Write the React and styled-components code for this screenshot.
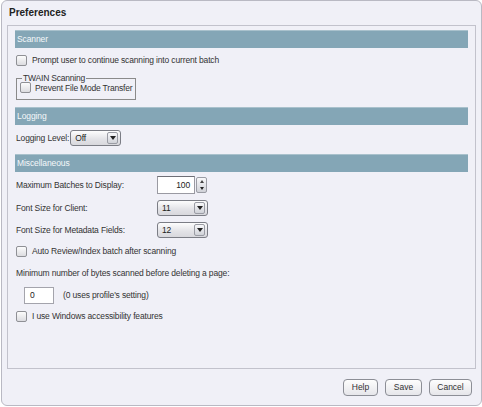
import React from "react";
import styled, { createGlobalStyle } from "styled-components";

const Global = createGlobalStyle`
  html, body { margin: 0; padding: 0; background: #ffffff; }
  body { font-family: "Liberation Sans", Arial, sans-serif; color: #333; }
`;

const Window = styled.div`
  box-sizing: border-box;
  width: 481px;
  height: 406px;
  margin: 0 0 0 1px;
  background: #f0f0f7;
  border: 1px solid #b9b9c3;
  border-radius: 6px;
  display: flex;
  flex-direction: column;
  padding: 0 5px 0 5px;
`;

const Title = styled.div`
  font-weight: bold;
  font-size: 10px;
  color: #222;
  height: 24px;
  line-height: 24px;
  padding-left: 2px;
`;

const Panel = styled.div`
  box-sizing: border-box;
  border: 1px solid #c2c2cc;
  height: 344px;
  padding: 4px 7px 0 7px;
  display: flex;
  flex-direction: column;
`;

const Header = styled.div`
  box-sizing: border-box;
  height: 18px;
  background: #84a6b6;
  border-top: 1px solid #a9c1cc;
  color: #f4f8fa;
  font-size: 8.5px;
  letter-spacing: -0.1px;
  line-height: 16px;
  padding-left: 2px;
  margin-top: ${(p) => p.$mt || 0}px;
`;

const Row = styled.div`
  display: flex;
  align-items: center;
  white-space: nowrap;
  height: ${(p) => p.$h || 22}px;
  margin-top: ${(p) => p.$mt || 0}px;
  padding-left: ${(p) => p.$pl || 1}px;
  font-size: 8.5px;
  letter-spacing: -0.15px;
  color: #333;
`;

const Box = styled.span`
  box-sizing: border-box;
  width: 11px;
  height: 11px;
  border: 1px solid #8f9095;
  border-radius: 2px;
  background: linear-gradient(#fcfcfc, #dcdce0);
  margin-right: ${(p) => p.$mr || 5}px;
  flex: none;
`;

const Group = styled.fieldset`
  box-sizing: border-box;
  width: 120px;
  height: 26px;
  margin: 3px 0 0 1px;
  padding: 0 0 0 3px;
  border: 1px solid #8a8a8a;
  display: flex;
  align-items: center;
  white-space: nowrap;
  font-size: 8.5px;
  letter-spacing: -0.2px;
  color: #333;
  legend {
    font-size: 8.5px;
    padding: 0 1px;
    margin-left: 2px;
    line-height: 8px;
  }
`;

const Label = styled.span`
  width: ${(p) => p.$w || "auto"};
  flex: none;
`;

const Select = styled.div`
  box-sizing: border-box;
  width: ${(p) => p.$w || 51}px;
  height: 16px;
  margin-left: ${(p) => p.$ml || 0}px;
  border: 1px solid #7b7d85;
  border-radius: 3px;
  background: linear-gradient(#fdfdfd, #e2e2e6 60%, #d8d8dd);
  display: flex;
  align-items: center;
  justify-content: space-between;
  padding: 0 2px 0 4px;
  font-size: 8.5px;
  color: #222;
`;

const Arrow = styled.span`
  box-sizing: border-box;
  width: 11px;
  height: 12px;
  border: 1px solid #9a9ca4;
  border-radius: 2px;
  background: linear-gradient(#f8f8fa, #d0d2d8);
  display: flex;
  align-items: center;
  justify-content: center;
  &::after {
    content: "";
    border-left: 3px solid transparent;
    border-right: 3px solid transparent;
    border-top: 4px solid #222;
  }
`;

const Spinner = styled.div`
  display: flex;
  align-items: center;
  width: 51px;
  height: 18px;
`;

const SpinInput = styled.div`
  box-sizing: border-box;
  width: 38px;
  height: 18px;
  border: 1px solid #9a9aa2;
  border-top-color: #6e6e76;
  background: #fff;
  font-size: 8.5px;
  text-align: right;
  padding-right: 4px;
  line-height: 16px;
  color: #222;
`;

const SpinButtons = styled.div`
  box-sizing: border-box;
  width: 11px;
  height: 16px;
  margin-left: 1px;
  border: 1px solid #9a9ca4;
  border-radius: 2px;
  background: linear-gradient(#f8f8fa, #d0d2d8);
  display: flex;
  flex-direction: column;
  align-items: center;
  justify-content: space-around;
  span {
    display: block;
    border-left: 2px solid transparent;
    border-right: 2px solid transparent;
  }
  span:first-child { border-bottom: 3px solid #444; }
  span:last-child { border-top: 3px solid #222; }
`;

const TextBox = styled.div`
  box-sizing: border-box;
  width: 30px;
  height: 17px;
  border: 1px solid #a4a4ac;
  background: #fff;
  font-size: 8.5px;
  line-height: 15px;
  padding-left: 5px;
  margin-right: 9px;
  color: #222;
`;

const Footer = styled.div`
  flex: 1;
  display: flex;
  justify-content: flex-end;
  align-items: center;
  gap: 7px;
  padding: 0 4px 0 0;
`;

const Button = styled.button`
  box-sizing: border-box;
  width: ${(p) => p.$w}px;
  height: 17px;
  border: 1px solid #8c8e96;
  border-radius: 4px;
  background: linear-gradient(#fdfdfd, #e6e6ea);
  font-family: "Liberation Sans", Arial, sans-serif;
  font-size: 8.5px;
  color: #333;
  padding: 0;
`;

export default function App() {
  return (
    <>
      <Global />
      <Window>
        <Title>Preferences</Title>
        <Panel>
          <Header>Scanner</Header>
          <Row $mt={1}>
            <Box />
            Prompt user to continue scanning into current batch
          </Row>
          <Group>
            <legend>TWAIN Scanning</legend>
            <Box $mr={4} />
            Prevent File Mode Transfer
          </Group>
          <Header $mt={7}>Logging</Header>
          <Row $h={26}>
            <Label>Logging Level:</Label>
            <Select $w={51} $ml={1}>
              Off
              <Arrow />
            </Select>
          </Row>
          <Header $mt={3}>Miscellaneous</Header>
          <Row $h={26}>
            <Label $w="141px">Maximum Batches to Display:</Label>
            <Spinner>
              <SpinInput>100</SpinInput>
              <SpinButtons>
                <span />
                <span />
              </SpinButtons>
            </Spinner>
          </Row>
          <Row $h={20}>
            <Label $w="141px">Font Size for Client:</Label>
            <Select>
              11
              <Arrow />
            </Select>
          </Row>
          <Row $h={24}>
            <Label $w="141px">Font Size for Metadata Fields:</Label>
            <Select>
              12
              <Arrow />
            </Select>
          </Row>
          <Row $h={18}>
            <Box />
            Auto Review/Index batch after scanning
          </Row>
          <Row $h={26}>Minimum number of bytes scanned before deleting a page:</Row>
          <Row $h={18} $pl={9}>
            <TextBox>0</TextBox>
            (0 uses profile's setting)
          </Row>
          <Row $h={24}>
            <Box />
            I use Windows accessibility features
          </Row>
        </Panel>
        <Footer>
          <Button $w={35}>Help</Button>
          <Button $w={37}>Save</Button>
          <Button $w={43}>Cancel</Button>
        </Footer>
      </Window>
    </>
  );
}
